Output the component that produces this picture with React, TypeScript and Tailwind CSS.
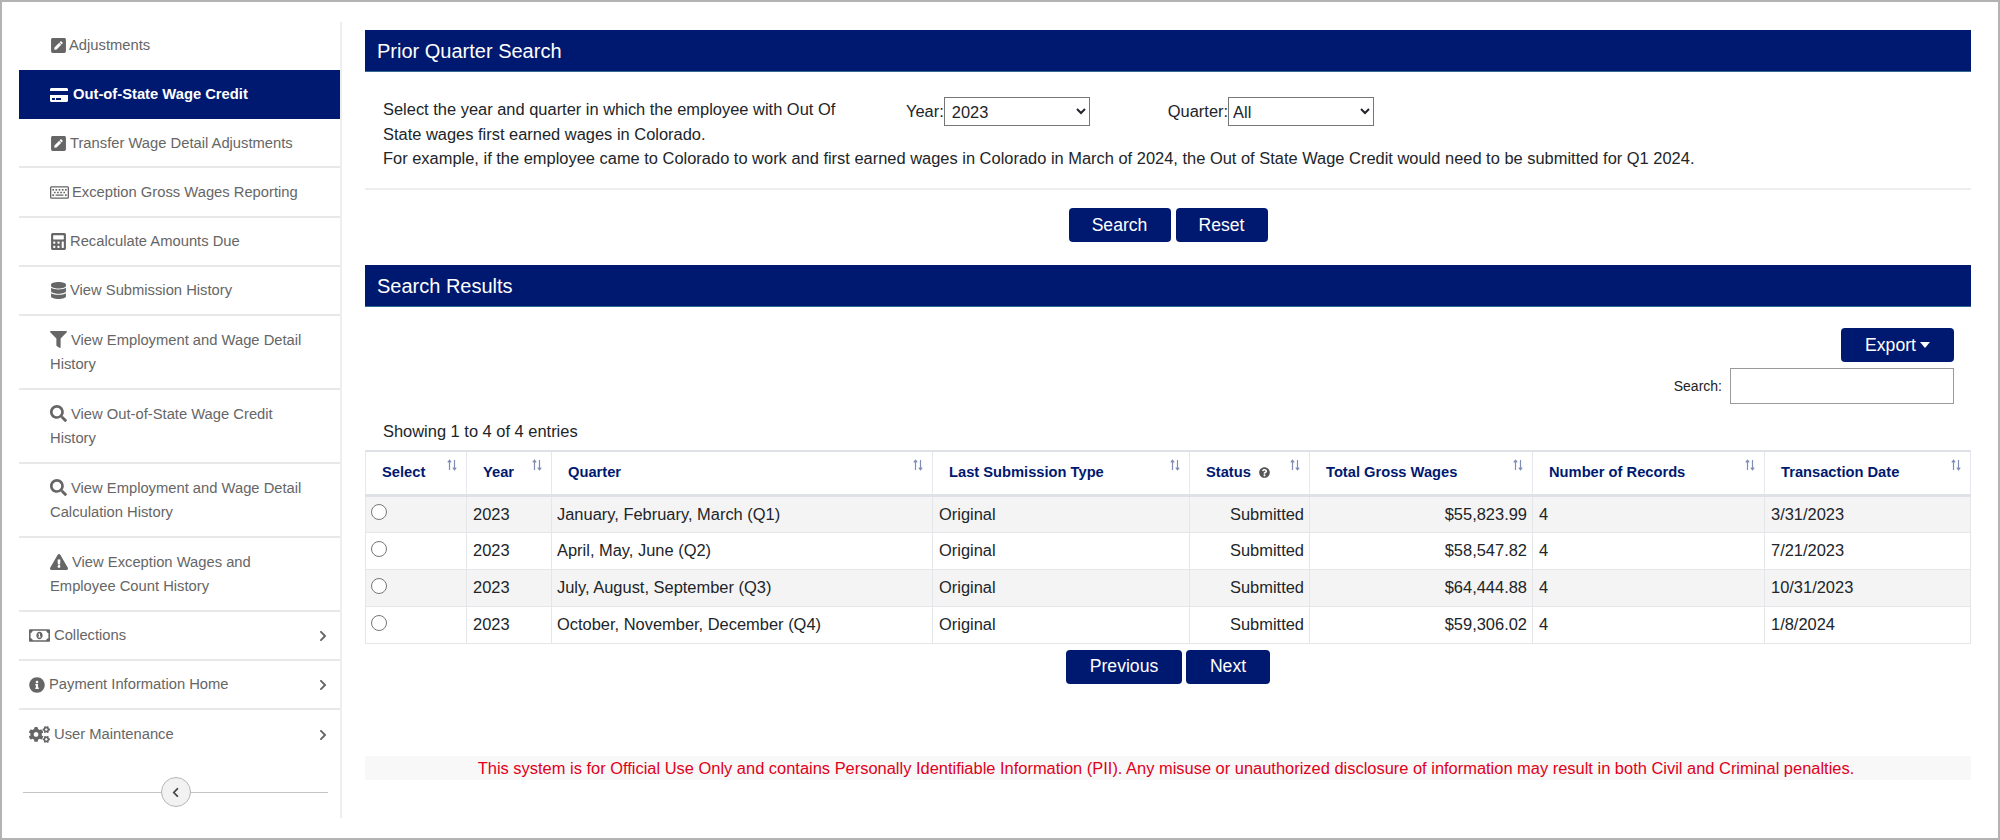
import React from "react";
import { FaPenSquare, FaCreditCard, FaRegKeyboard, FaCalculator, FaDatabase, FaFilter, FaSearch, FaExclamationTriangle, FaRegMoneyBillAlt, FaInfoCircle, FaCogs, FaChevronRight, FaChevronLeft, FaQuestionCircle } from "react-icons/fa";

const font = "font-['Liberation_Sans',Arial,sans-serif]";

function SortIcon() {
  return (
    <svg width="10" height="12" viewBox="0 0 10 12" className="shrink-0 text-[#7f8db5]" fill="none" stroke="currentColor" strokeWidth="1.2">
      <path d="M2.5 11V1.5M.8 3.3 2.5 1.2 4.2 3.3" />
      <path d="M7.5 1v9.5M5.8 8.7 7.5 10.8 9.2 8.7" />
    </svg>
  );
}

const sub: { icon: React.ReactNode; label: string; h: string; active?: boolean; noBorder?: boolean; extra?: string }[] = [
  { icon: <FaPenSquare size={17} />, label: "Adjustments", h: "h-[48px]", noBorder: true, extra: "pb-[2px]" },
  { icon: <FaCreditCard size={18} />, label: "Out-of-State Wage Credit", h: "h-[49px]", active: true },
  { icon: <FaPenSquare size={17} />, label: "Transfer Wage Detail Adjustments", h: "h-[49px]", extra: "pt-[2px]" },
  { icon: <FaRegKeyboard size={19} />, label: "Exception Gross Wages Reporting", h: "h-[50px]" },
  { icon: <FaCalculator size={17} />, label: "Recalculate Amounts Due", h: "h-[49px]" },
  { icon: <FaDatabase size={17} />, label: "View Submission History", h: "h-[49px]" },
];

const multi: { icon: React.ReactNode; a: string; b: string }[] = [
  { icon: <FaFilter size={17} />, a: "View Employment and Wage Detail", b: "History" },
  { icon: <FaSearch size={17} />, a: "View Out-of-State Wage Credit", b: "History" },
  { icon: <FaSearch size={17} />, a: "View Employment and Wage Detail", b: "Calculation History" },
  { icon: <FaExclamationTriangle size={18} />, a: "View Exception Wages and", b: "Employee Count History" },
];

const top: { icon: React.ReactNode; label: string }[] = [
  { icon: <FaRegMoneyBillAlt size={21} />, label: "Collections" },
  { icon: <FaInfoCircle size={16} />, label: "Payment Information Home" },
  { icon: <FaCogs size={21} />, label: "User Maintenance" },
];

const columns = [
  { t: "Select", w: "w-[101px]" },
  { t: "Year", w: "w-[85px]" },
  { t: "Quarter", w: "w-[381px]" },
  { t: "Last Submission Type", w: "w-[257px]" },
  { t: "Status", w: "w-[120px]" },
  { t: "Total Gross Wages", w: "w-[223px]" },
  { t: "Number of Records", w: "w-[232px]" },
  { t: "Transaction Date", w: "w-[206px]" },
];

const rows = [
  ["January, February, March (Q1)", "$55,823.99", "3/31/2023"],
  ["April, May, June (Q2)", "$58,547.82", "7/21/2023"],
  ["July, August, September (Q3)", "$64,444.88", "10/31/2023"],
  ["October, November, December (Q4)", "$59,306.02", "1/8/2024"],
];

function Btn({ children, w }: { children: React.ReactNode; w: string }) {
  return (
    <button className={`${w} h-[34px] rounded-[4px] bg-[#001970] text-white text-[17.6px] flex items-center justify-center gap-1`}>
      {children}
    </button>
  );
}

function Band({ children }: { children: React.ReactNode }) {
  return (
    <div className="h-[42px] bg-[#001970] border-b border-[#2f6a8f] text-white text-[20px] flex items-center pl-3">
      {children}
    </div>
  );
}

export default function App() {
  return (
    <div className={`${font} w-[2000px] h-[840px] border-2 border-[#b3b3b3] bg-white flex overflow-hidden`}>
      <aside className="ml-[17px] mt-5 mb-5 w-[323px] shrink-0 border-r-2 border-[#eeeeee] flex flex-col text-[14.75px] text-[#666666]">
        {sub.map((s) => (
          <div
            key={s.label}
            className={`${s.h} ${s.extra ?? ""} pl-[31px] flex items-center ${s.active ? "gap-[5px] bg-[#001970] text-white font-bold" : s.noBorder ? "gap-[2px]" : "gap-[3px] border-b-2 border-[#e8e8e8]"}`}
          >
            {s.icon}
            <span>{s.label}</span>
          </div>
        ))}
        {multi.map((m) => (
          <div key={m.a} className="h-[74px] pl-[31px] pr-2 border-b-2 border-[#e8e8e8] flex flex-col justify-center leading-[24.5px]">
            <div className="flex items-center gap-[4px]">
              {m.icon}
              <span>{m.a}</span>
            </div>
            <div>{m.b}</div>
          </div>
        ))}
        {top.map((t, i) => (
          <div key={t.label} className={`h-[49px] pl-[10px] pr-[11px] flex items-center gap-[4px] ${i < 2 ? "border-b-2 border-[#e8e8e8]" : ""}`}>
            {t.icon}
            <span>{t.label}</span>
            <FaChevronRight size={12} className="ml-auto" />
          </div>
        ))}
        <div className="mt-[18px] ml-1 mr-3 h-[30px] flex items-center">
          <div className="flex-1 h-px bg-[#c4c4c4]" />
          <button className="w-[30px] h-[30px] rounded-full border border-[#b5b5b5] bg-[#f2f2f2] flex items-center justify-center text-[#444]">
            <FaChevronLeft size={11} />
          </button>
          <div className="flex-1 h-px bg-[#c4c4c4]" />
        </div>
      </aside>

      <main className="ml-[23px] mt-7 w-[1606px] shrink-0 text-[16.44px] text-[#212529] flex flex-col">
        <Band>Prior Quarter Search</Band>
        <div className="h-[118px] border-b-2 border-[#eeeeee] pl-[18px] pt-[25px] leading-[24.5px]">
          <div className="flex">
            <div className="w-[480px]">
              Select the year and quarter in which the employee with Out Of State wages first earned wages in Colorado.
            </div>
            <div className="ml-[43px] flex items-start">
              <span className="leading-[28px]">Year:</span>
              <select defaultValue="2023" className="w-[146px] h-[29px] border border-[#767676] bg-white pl-[3px] text-[16.4px]">
                <option>2023</option>
              </select>
            </div>
            <div className="ml-[78px] flex items-start">
              <span className="leading-[28px]">Quarter:</span>
              <select defaultValue="All" className="w-[146px] h-[29px] border border-[#767676] bg-white text-[16.4px]">
                <option>All</option>
              </select>
            </div>
          </div>
          <div>For example, if the employee came to Colorado to work and first earned wages in Colorado in March of 2024, the Out of State Wage Credit would need to be submitted for Q1 2024.</div>
        </div>
        <div className="mt-[18px] flex justify-center gap-[5px]">
          <Btn w="w-[102px]">Search</Btn>
          <Btn w="w-[92px]">Reset</Btn>
        </div>
        <div className="mt-[23px]">
          <Band>Search Results</Band>
        </div>
        <div className="mt-[21px] flex justify-end pr-[17px]">
          <Btn w="w-[113px]">
            Export
            <span className="w-0 h-0 border-x-[5px] border-x-transparent border-t-[6px] border-t-white" />
          </Btn>
        </div>
        <div className="mt-[6px] flex justify-end items-center gap-2 pr-[17px] text-[14px] text-[#222]">
          <span>Search:</span>
          <input className="w-[224px] h-[36px] border border-[#9a9a9a] bg-white" />
        </div>
        <div className="mt-[15px] pl-[18px] leading-6">Showing 1 to 4 of 4 entries</div>
        <table className="mt-[7px] w-[1605px] table-fixed border-collapse text-[16.44px]">
          <thead>
            <tr className="h-[44px]">
              {columns.map((c) => (
                <th key={c.t} className={`${c.w} border-2 border-x border-x-[#e6e8ee] border-t-[#dee2e6] border-b-[3px] border-b-[#dee2e6] p-0 font-bold text-left text-[14.7px] text-[#001970]`}>
                  <div className="pl-4 pr-[9px] -mt-[1px] flex items-start justify-between">
                    <span className="flex items-center gap-[8px]">
                      {c.t}
                      {c.t === "Status" && <FaQuestionCircle size={11} className="text-[#555]" />}
                    </span>
                    <span className="-mt-[2px]"><SortIcon /></span>
                  </div>
                </th>
              ))}
            </tr>
          </thead>
          <tbody>
            {rows.map((r, i) => (
              <tr key={r[0]} className={`h-[37px] ${i % 2 === 0 ? "bg-[#f4f4f4]" : "bg-white"}`}>
                <td className="border border-[#e4e6ea] pl-[5px] pb-[6px]"><input type="radio" name="q" className="w-[16px] h-[16px] align-middle" /></td>
                <td className="border border-[#e4e6ea] pl-[6px]">2023</td>
                <td className="border border-[#e4e6ea] pl-[5px]">{r[0]}</td>
                <td className="border border-[#e4e6ea] pl-[6px]">Original</td>
                <td className="border border-[#e4e6ea] pr-[5px] text-right">Submitted</td>
                <td className="border border-[#e4e6ea] pr-[5px] text-right">{r[1]}</td>
                <td className="border border-[#e4e6ea] pl-[6px]">4</td>
                <td className="border border-[#e4e6ea] pl-[6px]">{r[2]}</td>
              </tr>
            ))}
          </tbody>
        </table>
        <div className="mt-[6px] flex justify-center gap-[4px]">
          <Btn w="w-[116px]">Previous</Btn>
          <Btn w="w-[84px]">Next</Btn>
        </div>
        <div className="mt-[72px] h-[24px] bg-[#f8f8f8] text-[#e0001b] text-center leading-6 pr-[4px]">
          This system is for Official Use Only and contains Personally Identifiable Information (PII). Any misuse or unauthorized disclosure of information may result in both Civil and Criminal penalties.
        </div>
      </main>
    </div>
  );
}
